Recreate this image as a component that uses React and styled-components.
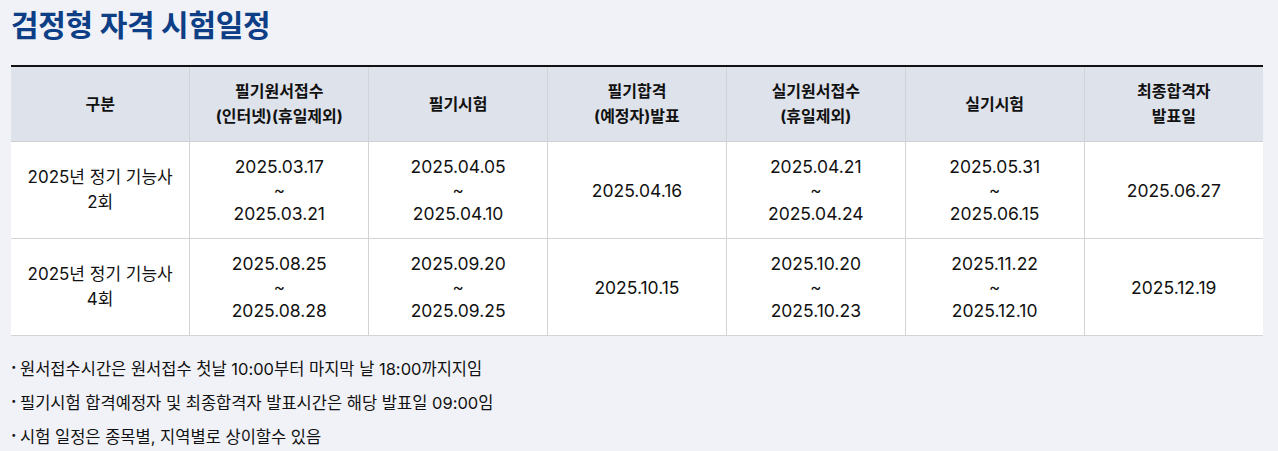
import React from "react";
import styled, { createGlobalStyle } from "styled-components";

const GlobalStyle = createGlobalStyle`
  html, body {
    margin: 0;
    padding: 0;
    background: #f0f2f7;
  }
  body {
    font-family: Inter, "Noto Sans CJK KR", sans-serif;
    color: #111;
  }
`;

const schedule = [
  {
    round: ["2025년 정기 기능사", "2회"],
    cells: [
      ["2025.03.17", "~", "2025.03.21"],
      ["2025.04.05", "~", "2025.04.10"],
      ["2025.04.16"],
      ["2025.04.21", "~", "2025.04.24"],
      ["2025.05.31", "~", "2025.06.15"],
      ["2025.06.27"],
    ],
  },
  {
    round: ["2025년 정기 기능사", "4회"],
    cells: [
      ["2025.08.25", "~", "2025.08.28"],
      ["2025.09.20", "~", "2025.09.25"],
      ["2025.10.15"],
      ["2025.10.20", "~", "2025.10.23"],
      ["2025.11.22", "~", "2025.12.10"],
      ["2025.12.19"],
    ],
  },
];

const headers = [
  ["구분"],
  ["필기원서접수", "(인터넷)(휴일제외)"],
  ["필기시험"],
  ["필기합격", "(예정자)발표"],
  ["실기원서접수", "(휴일제외)"],
  ["실기시험"],
  ["최종합격자", "발표일"],
];

const notes = [
  "원서접수시간은 원서접수 첫날 10:00부터 마지막 날 18:00까지지임",
  "필기시험 합격예정자 및 최종합격자 발표시간은 해당 발표일 09:00임",
  "시험 일정은 종목별, 지역별로 상이할수 있음",
];

const Page = styled.div`
  width: 1252px;
  padding: 6px 0 0 11px;
`;

const Title = styled.h2`
  margin: 0 0 21px;
  font-size: 30px;
  font-weight: 700;
  color: #0e3f86;
  letter-spacing: -0.3px;
  line-height: 38px;
`;

const Table = styled.table`
  width: 100%;
  border-collapse: collapse;
  table-layout: fixed;
  border-top: 2px solid #111;
`;

const Th = styled.th`
  background: #dee2ea;
  height: 74px;
  font-size: 16px;
  font-weight: 700;
  line-height: 25px;
  text-align: center;
  vertical-align: middle;
  border-bottom: 1px solid #cfd0d4;
  border-left: 1px solid #d2d3d6;
  padding: 0;
  &:first-child {
    border-left: none;
  }
`;

const Td = styled.td`
  background: #fff;
  height: 96px;
  font-size: 17px;
  line-height: 24px;
  text-align: center;
  vertical-align: middle;
  border-bottom: 1px solid #d2d3d6;
  border-left: 1px solid #d2d3d6;
  padding: 0;
  &:first-child {
    border-left: none;
  }
`;

const Line = styled.div`
  font-size: ${(p) => (p.$date ? "17.5px" : "17px")};
  line-height: ${(p) => (p.$tilde ? "22px" : "25px")};
`;

const Notes = styled.ul`
  list-style: none;
  margin: 16px 0 0;
  padding: 0;
`;

const Note = styled.li`
  font-size: 16.5px;
  line-height: 34px;
  padding-left: 9px;
  position: relative;
  &::before {
    content: "·";
    position: absolute;
    left: 0;
    top: -2px;
    font-weight: 700;
  }
`;

export default function App() {
  return (
    <>
      <GlobalStyle />
      <Page>
        <Title>검정형 자격 시험일정</Title>
        <Table>
          <thead>
            <tr>
              {headers.map((h, i) => (
                <Th key={i}>
                  {h.map((t) => (
                    <div key={t}>{t}</div>
                  ))}
                </Th>
              ))}
            </tr>
          </thead>
          <tbody>
            {schedule.map((row, r) => (
              <tr key={r}>
                <Td>
                  {row.round.map((t) => (
                    <Line key={t}>{t}</Line>
                  ))}
                </Td>
                {row.cells.map((c, i) => (
                  <Td key={i}>
                    {c.map((t, j) => (
                      <Line key={j} $tilde={t === "~"} $date={t !== "~"}>
                        {t}
                      </Line>
                    ))}
                  </Td>
                ))}
              </tr>
            ))}
          </tbody>
        </Table>
        <Notes>
          {notes.map((n) => (
            <Note key={n}>{n}</Note>
          ))}
        </Notes>
      </Page>
    </>
  );
}
